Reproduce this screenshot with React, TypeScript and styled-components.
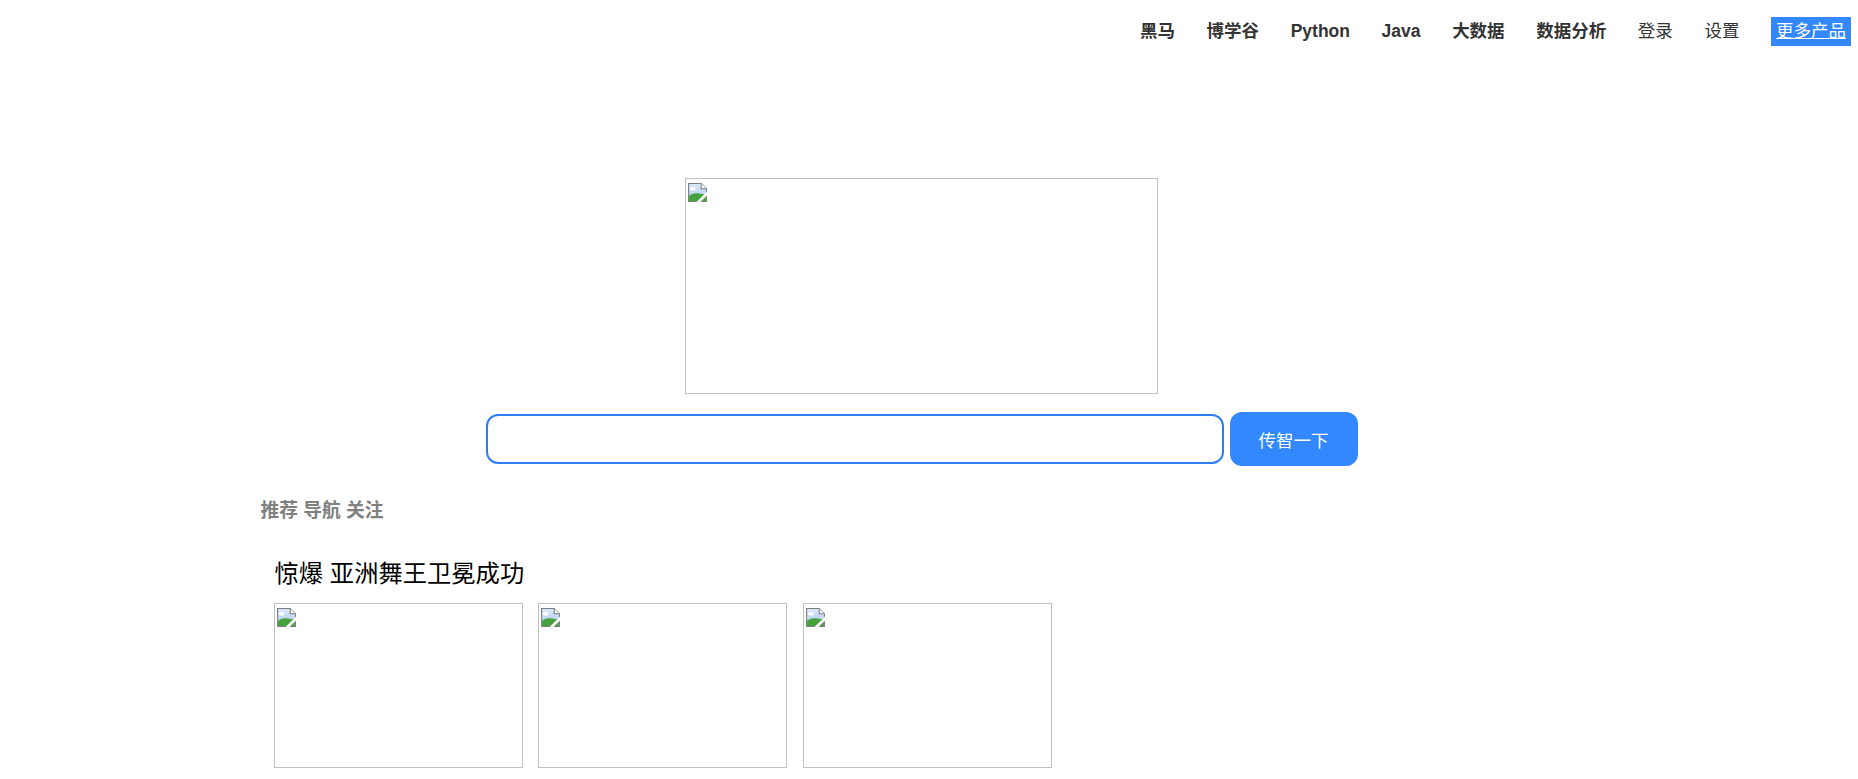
import React from 'react';
import styled, { createGlobalStyle } from 'styled-components';

const GlobalStyle = createGlobalStyle`
  html, body { margin: 0; padding: 0; background: #fff; }
  body { font-family: "Liberation Sans", "Noto Sans CJK SC", sans-serif; }
  * { box-sizing: border-box; }
`;

const TopNav = styled.nav`
  display: flex;
  justify-content: flex-end;
  align-items: center;
  gap: 31.6px;
  padding: 17px 7px 0 0;
`;

const NavLink = styled.a<{ $bold?: boolean }>`
  font-size: 17.5px;
  line-height: 29px;
  color: #333;
  font-weight: ${(p) => (p.$bold ? 700 : 400)};
  text-decoration: none;
`;

const MoreLink = styled.a`
  display: block;
  background: #3388ff;
  color: #fff;
  font-size: 17.5px;
  line-height: 29px;
  padding: 0 5px;
  text-decoration: underline;
`;

const Page = styled.div`
  padding-right: 15px;
`;

const Container = styled.main`
  width: 1320px;
  margin: 0 auto;
`;

const Hero = styled.section`
  display: flex;
  flex-direction: column;
  align-items: center;
  padding-top: 132px;
`;

const Broken = styled.div<{ $w: number; $h: number }>`
  width: ${(p) => p.$w}px;
  height: ${(p) => p.$h}px;
  border: 1px solid #c0c0c0;
  padding: 3px 0 0 1px;
  flex: none;
  line-height: 0;
`;

const SearchRow = styled.form`
  display: flex;
  align-items: center;
  gap: 6px;
  margin-top: 18px;
`;

const SearchInput = styled.input`
  width: 738px;
  height: 50px;
  border: 2px solid #2f7df6;
  border-radius: 12px;
  outline: none;
  padding: 0 12px;
  font-size: 17px;
`;

const SearchButton = styled.button`
  width: 128px;
  height: 54px;
  border: none;
  border-radius: 12px;
  background: #3388ff;
  color: #fff;
  font-family: inherit;
  font-size: 17.5px;
  cursor: pointer;
`;

const Tabs = styled.div`
  margin: 33px 0 0 -1px;
  font-size: 18.75px;
  line-height: 24px;
  font-weight: 700;
  color: #808080;
`;

const Feed = styled.section`
  margin-top: 35px;
`;

const Headline = styled.h2`
  margin: 0 0 0 13px;
  font-size: 24.3px;
  line-height: 32px;
  font-weight: 400;
  color: #000;
`;

const Thumbs = styled.div`
  display: flex;
  gap: 15.5px;
  margin: 13px 0 0 12px;
`;

const BrokenIcon = () => (
  <svg width="21" height="21" viewBox="0 0 20 20">
    <defs>
      <linearGradient id="sky" x1="0" y1="0" x2="0" y2="1">
        <stop offset="0" stopColor="#dbe8fa" />
        <stop offset="1" stopColor="#a9c9f2" />
      </linearGradient>
    </defs>
    <path d="M1.5 1.5 H13.5 L18.5 6.5 V18.5 H1.5 Z" fill="url(#sky)" stroke="#7d7d7d" />
    <ellipse cx="5.5" cy="6.5" rx="2.8" ry="1.7" fill="#fff" />
    <path d="M2 18 V13 Q7 9.5 14 11.5 L18 11.5 V18 Z" fill="#45a23a" />
    <path d="M10 20 L20 10" stroke="#fff" strokeWidth="2.6" />
    <path d="M13.5 1.5 V6.5 H18.5" fill="#fff" stroke="#7d7d7d" />
  </svg>
);

const BrokenImage = ({ w, h }: { w: number; h: number }) => (
  <Broken $w={w} $h={h}>
    <BrokenIcon />
  </Broken>
);

export default function App() {
  return (
    <>
      <GlobalStyle />
      <TopNav>
        <NavLink $bold href="#">黑马</NavLink>
        <NavLink $bold href="#">博学谷</NavLink>
        <NavLink $bold href="#">Python</NavLink>
        <NavLink $bold href="#">Java</NavLink>
        <NavLink $bold href="#">大数据</NavLink>
        <NavLink $bold href="#">数据分析</NavLink>
        <NavLink href="#">登录</NavLink>
        <NavLink href="#">设置</NavLink>
        <MoreLink href="#">更多产品</MoreLink>
      </TopNav>
      <Page>
        <Container>
          <Hero>
            <BrokenImage w={473} h={216} />
            <SearchRow onSubmit={(e) => e.preventDefault()}>
              <SearchInput type="text" />
              <SearchButton type="submit">传智一下</SearchButton>
            </SearchRow>
          </Hero>
          <Tabs>推荐 导航 关注</Tabs>
          <Feed>
            <Headline>惊爆 亚洲舞王卫冕成功</Headline>
            <Thumbs>
              <BrokenImage w={249} h={165} />
              <BrokenImage w={249} h={165} />
              <BrokenImage w={249} h={165} />
            </Thumbs>
          </Feed>
        </Container>
      </Page>
    </>
  );
}
